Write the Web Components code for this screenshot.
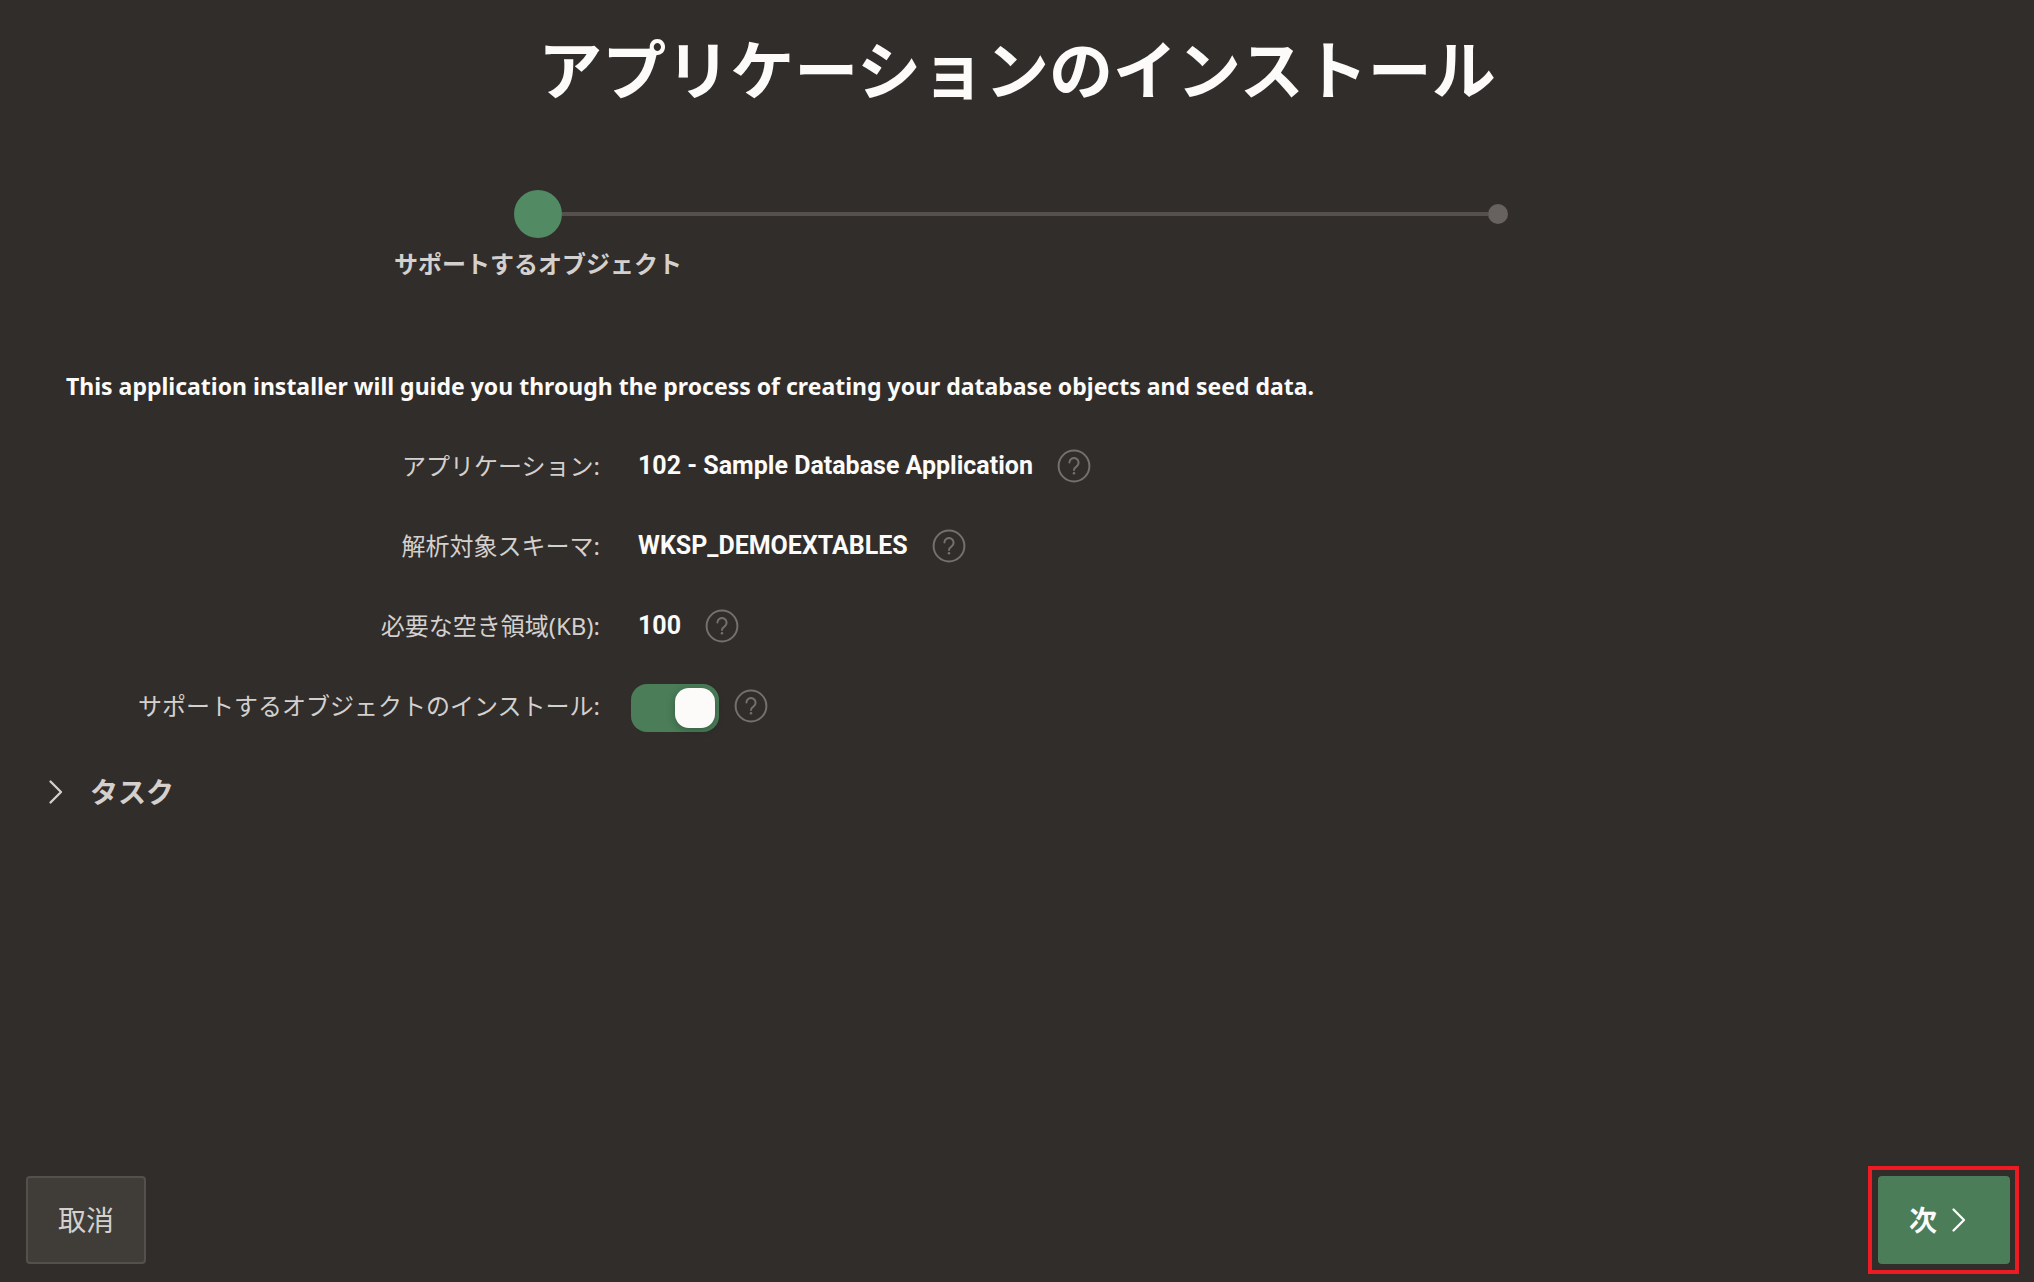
<!DOCTYPE html>
<html lang="ja">
<head>
<meta charset="utf-8">
<title>アプリケーションのインストール</title>
<style>
html, body { margin: 0; }
body { background: #312d2a; color: #d3d0ce; font: 24px/32px "Noto Sans", "Noto Sans CJK JP", sans-serif; }
</style>
</head>
<body>
<install-wizard>
  <span slot="title">アプリケーションのインストール</span>
  <wizard-progress slot="progress"><wizard-step current>サポートするオブジェクト</wizard-step><wizard-step></wizard-step></wizard-progress>
  <span slot="intro">This application installer will guide you through the process of creating your database objects and seed data.</span>
  <form-row label="アプリケーション:">102 - Sample Database Application</form-row>
  <form-row label="解析対象スキーマ:">WKSP_DEMOEXTABLES</form-row>
  <form-row label="必要な空き領域(KB):">100</form-row>
  <switch-row label="サポートするオブジェクトのインストール:"></switch-row>
  <task-region>タスク</task-region>
  <wizard-button slot="previous">取消</wizard-button>
  <wizard-button slot="next" hot marked>次</wizard-button>
</install-wizard>
<script>
const define = (name, html, setup) => customElements.define(name, class extends HTMLElement {
  connectedCallback() {
    if (this.shadowRoot) return;
    this.attachShadow({ mode: "open" }).innerHTML = html;
    if (setup) setup(this, this.shadowRoot);
  }
});
const chevron = '<svg width="16" height="28" viewBox="0 0 16 28" aria-hidden="true"><path d="M2.500 3.500 13 14 2.500 24.500" fill="none" stroke="currentColor" stroke-width="2.300" stroke-linecap="round" stroke-linejoin="round"/></svg>';

define("install-wizard", `
<style>
:host { display: flex; flex-direction: column; min-height: 100vh; box-sizing: border-box; }
h1 { margin: 0; padding-top: 22px; font-size: 64px; line-height: 96px; font-weight: 700; text-align: center; color: #fcfbfa; }
main { flex: 1; display: flex; flex-direction: column; }
p { margin: 0; padding: 0 66px; font-size: 23px; font-weight: 700; color: #fcfbfa; }
.rows { padding-top: 24px; }
footer { display: flex; justify-content: space-between; align-items: center; padding: 0 15px 8px 26px; }
</style>
<main>
<h1><slot name="title"></slot></h1>
<slot name="progress"></slot>
<p><slot name="intro"></slot></p>
<div class="rows"><slot></slot></div>
</main>
<footer><slot name="previous"></slot><slot name="next"></slot></footer>`);

define("wizard-progress", `
<style>:host { display: flex; padding: 72px 56px 90px 58px; font-weight: 700; }</style><slot></slot>`);

define("wizard-step", `
<style>
:host { flex: 1 1 0; display: flex; flex-direction: column; align-items: center; }
.track { width: 100%; display: flex; align-items: center; height: 48px; }
i { flex: 1; height: 4px; }
.dot { width: 20px; height: 20px; border-radius: 50%; background: #67625f; }
:host([current]) .dot { width: 48px; height: 48px; background: #528a63; }
:host(:first-child) i:last-child, :host(:last-child) i:first-child { background: #55504c; }
.label { padding-top: 10px; height: 32px; white-space: nowrap; }
</style>
<div class="track"><i></i><span class="dot"></span><i></i></div>
<div class="label"><slot></slot></div>`);

define("help-button", `
<style>
:host { display: flex; }
button { border: 0; padding: 0; background: none; color: #74706d; display: flex; }
</style>
<button type="button" aria-label="ヘルプ"><svg width="34" height="34" viewBox="0 0 34 34" fill="none" stroke="currentColor" stroke-width="2"><circle cx="17" cy="17" r="15.400"/><path d="M12.400 13.600a4.600 4.600 0 1 1 7 4c-1.700 1-2.400 1.700-2.400 3.300" stroke-linecap="round"/><circle cx="17" cy="24.300" r="1.300" fill="currentColor" stroke="none"/></svg></button>`);

define("form-row", `
<style>
:host { display: flex; align-items: center; height: 80px; }
.label { width: 600px; text-align: right; }
.value { margin-left: 38px; margin-right: 24px; font-family: Roboto, "Noto Sans CJK JP", sans-serif; font-size: 25px; font-weight: 700; color: #fcfbfa; }
</style>
<span class="label" id="l"></span>
<span class="value" role="group" aria-labelledby="l"><slot></slot></span>
<help-button></help-button>`, (h, r) => { r.querySelector("#l").textContent = h.getAttribute("label"); });

define("switch-row", `
<style>
:host { display: flex; align-items: center; height: 80px; }
label { width: 600px; text-align: right; }
input { appearance: none; box-sizing: border-box; display: flex; justify-content: flex-start; width: 88px; height: 48px; margin: 4px 15px 0 31px; padding: 4px; border-radius: 16px; background: #55504c; }
input::before { content: ""; width: 40px; height: 40px; border-radius: 14px; background: #fcfbfa; box-shadow: 0 2px 8px rgba(0,0,0,.25); }
input:checked { justify-content: flex-end; background: #4a7d58; }
</style>
<label for="s"></label>
<input id="s" type="checkbox" role="switch" checked>
<help-button></help-button>`, (h, r) => { r.querySelector("label").textContent = h.getAttribute("label"); });

define("task-region", `
<style>
:host { display: block; padding: 26px 48px; }
button { display: flex; align-items: center; gap: 26px; border: 0; padding: 0; background: none; color: inherit; font: inherit; font-weight: 700; font-size: 28px; line-height: 40px; }
</style>
<button type="button" aria-expanded="false">${chevron}<slot></slot></button>`);

define("wizard-button", `
<style>
:host { display: block; }
:host([marked]) { border: 4px solid #ed1c24; padding: 6px 5px 6px 6px; }
button { display: flex; align-items: center; justify-content: center; gap: 14px; box-sizing: border-box; min-width: 120px; height: 88px; padding: 0 30px; border: 2px solid #55504c; border-radius: 4px; background: #403c38; color: inherit; font: inherit; font-size: 28px; line-height: 40px; }
:host([hot]) button { background: #4a7d58; border-color: #4a7d58; color: #fcfbfa; font-weight: 700; min-width: 132px; padding: 0 40px 0 28px; }
svg { display: none; }
:host([hot]) svg { display: block; }
</style>
<button type="button"><slot></slot>${chevron}</button>`);
</script>
</body>
</html>
